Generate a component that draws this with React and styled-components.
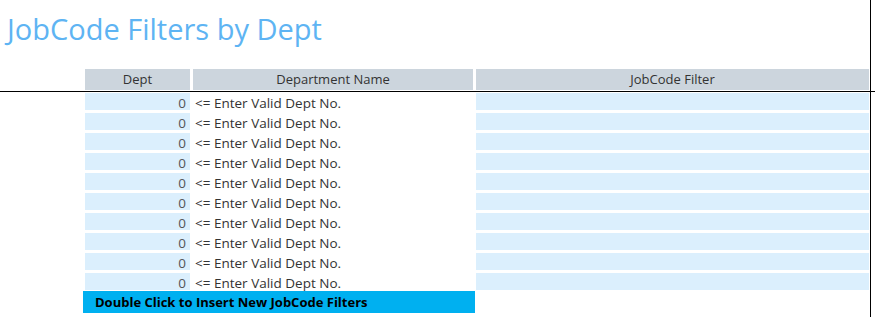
import React from "react";
import styled, { createGlobalStyle } from "styled-components";

const GlobalStyle = createGlobalStyle`
  html, body {
    margin: 0;
    padding: 0;
    background: #fff;
  }
  body {
    font-family: "Open Sans", "Noto Sans", "Liberation Sans", sans-serif;
  }
`;

const ROWS = Array.from({ length: 10 }, () => ({ dept: 0, name: "<= Enter Valid Dept No.", filter: "" }));

const App = () => {
  return (
    <Sheet>
      <GlobalStyle />
      <Top>
        <Title>JobCode Filters by Dept</Title>
        <HeaderRow>
          <HeaderCell>Dept</HeaderCell>
          <HeaderCell>Department Name</HeaderCell>
          <HeaderCell>JobCode Filter</HeaderCell>
        </HeaderRow>
      </Top>
      <Rule />
      <Body>
        <Grid>
          {ROWS.map((row, i) => (
            <React.Fragment key={i}>
              <DeptCell>{row.dept}</DeptCell>
              <NameCell>{row.name}</NameCell>
              <FilterCell>{row.filter}</FilterCell>
            </React.Fragment>
          ))}
        </Grid>
        <InsertBar>Double Click to Insert New JobCode Filters</InsertBar>
      </Body>
    </Sheet>
  );
};

export default App;

// Styled Components

const Sheet = styled.div`
  width: 875px;
  height: 317px;
  overflow: hidden;
  display: flex;
  flex-direction: column;
`;

const Top = styled.div`
  width: 870px;
  height: 91px;
  border-right: 1px solid #000;
  display: flex;
  flex-direction: column;
  justify-content: space-between;
`;

const Title = styled.h1`
  margin: 0;
  padding: 11px 0 0 7px;
  font-size: 29px;
  font-weight: 400;
  line-height: 36px;
  color: #5eb4f3;
`;

const HeaderRow = styled.div`
  display: grid;
  grid-template-columns: 105px 280px 393px;
  column-gap: 3px;
  margin: 0 0 1px 85px;
`;

const HeaderCell = styled.div`
  height: 21px;
  background: #ccd5dd;
  color: #333;
  font-size: 13px;
  line-height: 21px;
  text-align: center;
  white-space: nowrap;
`;

const Rule = styled.div`
  width: 875px;
  height: 1px;
  background: #000;
  flex-shrink: 0;
`;

const Body = styled.div`
  width: 870px;
  flex: 1;
  border-right: 1px solid #000;
  padding-top: 1px;
`;

const Grid = styled.div`
  display: grid;
  grid-template-columns: 105px 280px 393px;
  grid-auto-rows: 17px;
  column-gap: 3px;
  row-gap: 3px;
  margin-left: 85px;
`;

const Cell = styled.div`
  font-size: 13.5px;
  line-height: 21px;
  white-space: nowrap;
`;

const DeptCell = styled(Cell)`
  background: #dbeffd;
  color: #555;
  text-align: right;
  padding-right: 4px;
`;

const NameCell = styled(Cell)`
  color: #333;
  padding-left: 2px;
`;

const FilterCell = styled(Cell)`
  background: #dbeffd;
`;

const InsertBar = styled.div`
  width: 392px;
  height: 22px;
  margin: 1px 0 0 83px;
  padding-left: 12px;
  box-sizing: border-box;
  background: #00b0f0;
  color: #000;
  font-size: 13px;
  font-weight: 700;
  line-height: 22px;
  white-space: nowrap;
`;
